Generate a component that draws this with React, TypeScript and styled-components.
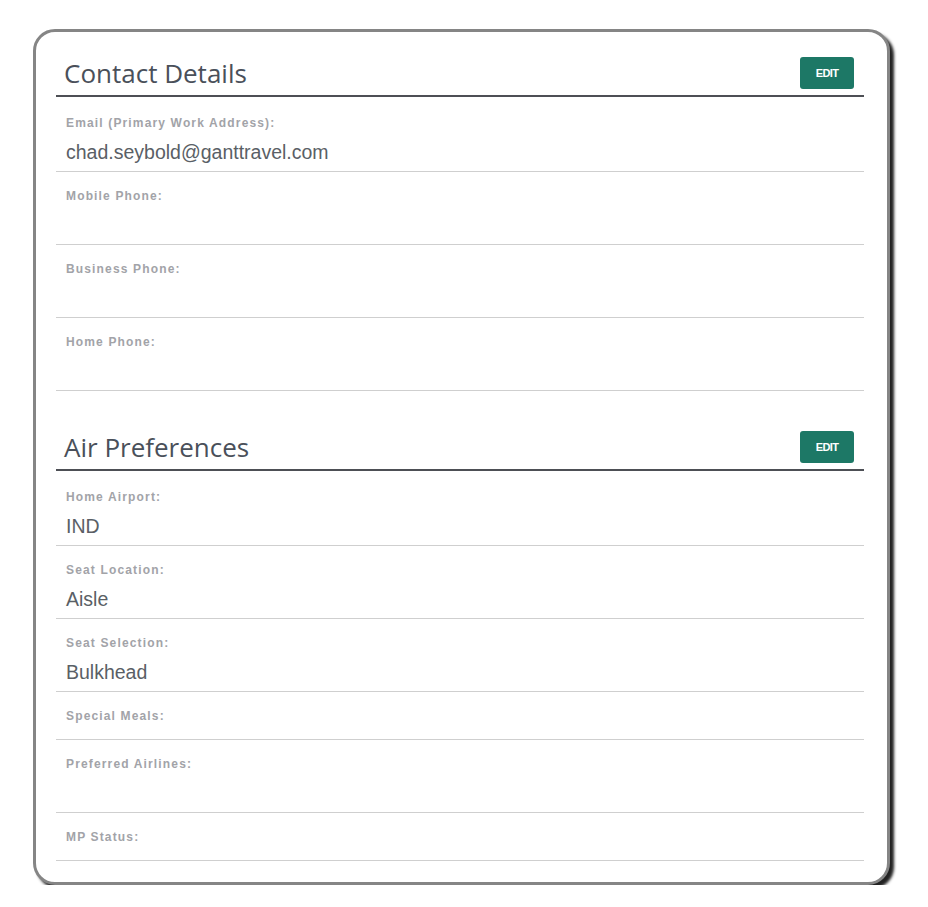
import React from 'react';
import styled, { createGlobalStyle } from 'styled-components';

const GlobalStyle = createGlobalStyle`
  body {
    margin: 0;
    background: #ffffff;
    font-family: "Liberation Sans", Arial, sans-serif;
  }
`

const Card = styled.div`
  box-sizing: border-box;
  margin: 29px 0 0 33px;
  width: 857px;
  height: 856px;
  border: 3px solid #858585;
  border-radius: 22px;
  box-shadow: 4px 4px 3px #222;
  background: #fff;
  padding: 25px 23px 19px 20px;
  display: flex;
  flex-direction: column;
`

const Section = styled.section<{ first?: boolean }>`
  margin-top: ${({ first }) => (first ? '0' : '40px')};
`

const SectionHeader = styled.div`
  display: flex;
  align-items: center;
  justify-content: space-between;
  padding: 0 10px 6px 8px;
  border-bottom: 2px solid #4d4f55;
  margin-bottom: 2px;
`

const Title = styled.h2`
  margin: 0;
  font-family: "Open Sans", sans-serif;
  font-weight: 400;
  font-size: 26px;
  color: #4a505a;
  line-height: 32px;
`

const EditButton = styled.button`
  width: 54px;
  height: 32px;
  border: none;
  border-radius: 3px;
  background: #1d7866;
  color: #fff;
  font-family: "Liberation Sans", Arial, sans-serif;
  font-weight: 700;
  font-size: 11px;
  letter-spacing: -0.6px;
  padding: 0;
  cursor: pointer;
`

const Row = styled.div`
  padding: 17px 10px 0;
  border-bottom: 1px solid #cfcfcf;
`

const Label = styled.div<{ solo?: boolean }>`
  font-size: 12px;
  font-weight: 700;
  color: #a2a3a8;
  line-height: 15px;
  letter-spacing: 1.15px;
  margin-bottom: ${({ solo }) => (solo ? '15px' : '9px')};
`

const Value = styled.div`
  font-size: 19.5px;
  color: #5a5f66;
  line-height: 24px;
  min-height: 24px;
  margin-bottom: 7px;
`

type Field = { label: string; value?: string; solo?: boolean }

const contact: Field[] = [
  { label: 'Email (Primary Work Address):', value: 'chad.seybold@ganttravel.com' },
  { label: 'Mobile Phone:', value: '' },
  { label: 'Business Phone:', value: '' },
  { label: 'Home Phone:', value: '' },
]

const air: Field[] = [
  { label: 'Home Airport:', value: 'IND' },
  { label: 'Seat Location:', value: 'Aisle' },
  { label: 'Seat Selection:', value: 'Bulkhead' },
  { label: 'Special Meals:', solo: true },
  { label: 'Preferred Airlines:', value: '' },
  { label: 'MP Status:', solo: true },
]

const Block = ({ title, fields, first }: { title: string; fields: Field[]; first?: boolean }) => (
  <Section first={first}>
    <SectionHeader>
      <Title>{title}</Title>
      <EditButton>EDIT</EditButton>
    </SectionHeader>
    {fields.map((f) => (
      <Row key={f.label}>
        <Label solo={f.solo}>{f.label}</Label>
        {!f.solo && <Value>{f.value}</Value>}
      </Row>
    ))}
  </Section>
)

const App = () => {
  return (
    <>
      <GlobalStyle />
      <Card>
        <Block title="Contact Details" fields={contact} first />
        <Block title="Air Preferences" fields={air} />
      </Card>
    </>
  )
}

export default App;
